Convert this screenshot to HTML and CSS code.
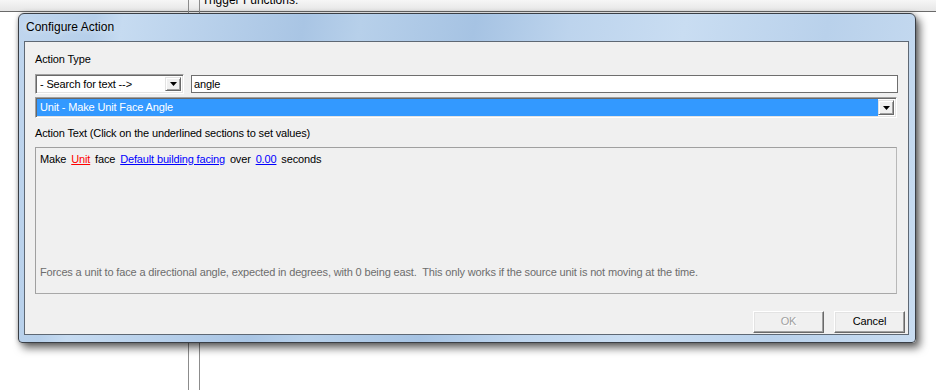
FILE: index.html
```html
<!DOCTYPE html>
<html>
<head>
<meta charset="utf-8">
<link rel="stylesheet" href="styles.css">
</head>
<body>
<div class="desktop">
  <div class="behind">
    <div class="behind-top"><span class="behind-title">Trigger Functions:</span></div>
    <div class="vline vline-a"></div>
    <div class="vline vline-b"></div>
  </div>

  <div class="dialog">
    <div class="titlebar">Configure Action</div>
    <div class="client">
      <div class="label">Action Type</div>
      <div class="row1">
        <div class="combo combo-small">
          <span class="combo-text">- Search for text --&gt;</span>
          <span class="drop"><svg width="7" height="4" viewBox="0 0 7 4"><path d="M0 0H7L3.5 4Z" fill="#000"/></svg></span>
        </div>
        <div class="textbox">angle</div>
      </div>
      <div class="combo combo-wide">
        <span class="combo-text selected">Unit - Make Unit Face Angle</span>
        <span class="drop"><svg width="7" height="4" viewBox="0 0 7 4"><path d="M0 0H7L3.5 4Z" fill="#000"/></svg></span>
      </div>
      <div class="label label2">Action Text (Click on the underlined sections to set values)</div>
      <div class="textarea">
        <div class="action-line">Make <a class="link red">Unit</a> face <a class="link blue">Default building facing</a> over <a class="link blue">0.00</a> seconds</div>
        <div class="desc">Forces a unit to face a directional angle, expected in degrees, with 0 being east.&nbsp; This only works if the source unit is not moving at the time.</div>
      </div>
      <div class="buttons">
        <div class="btn disabled">OK</div>
        <div class="btn">Cancel</div>
      </div>
    </div>
  </div>
</div>
</body>
</html>
```

FILE: styles.css
```css
* { box-sizing: border-box; }
html, body { margin: 0; padding: 0; }
body {
  width: 936px;
  height: 390px;
  background: #ffffff;
  overflow: hidden;
  font-family: "Liberation Sans", Arial, sans-serif;
  font-size: 11px;
  color: #000;
}
.desktop {
  position: relative;
  width: 936px;
  height: 390px;
}
.behind {
  position: absolute;
  left: 0; top: 0;
  width: 936px; height: 390px;
}
.behind-top {
  height: 12px;
  background: linear-gradient(#f6f6f6, #e6e6e6);
  border-bottom: 1px solid #6a6a6a;
  overflow: hidden;
  padding-left: 202px;
}
.behind-title {
  display: block;
  font-size: 12px;
  line-height: 12px;
  margin-top: -6px;
  color: #000;
}
.vline {
  position: absolute;
  top: 0;
  bottom: 0;
  width: 1px;
  background: #8c8c8c;
}
.vline-a { left: 188px; }
.vline-b { left: 199px; }

.dialog {
  position: absolute;
  left: 18px;
  top: 13px;
  width: 898px;
  height: 330px;
  border: 1px solid #3a3f46;
  border-radius: 6px 6px 4px 4px;
  background: linear-gradient(100deg, #c0d6ee 0%, #b6cfea 8%, #c6dbf1 11%, #a9c5e4 30%, #b7d0ea 36%, #a6c3e3 48%, #bdd4ed 58%, #c9ddf2 70%, #b9d1eb 85%, #c8dcf1 100%);
  box-shadow: 4px 5px 9px rgba(0,0,0,0.6), 0 0 4px rgba(0,0,0,0.25);
  display: flex;
  flex-direction: column;
  padding: 0 6px 7px 5px;
}
.titlebar {
  height: 27px;
  flex: none;
  font-family: "Liberation Sans", Arial, sans-serif;
  font-size: 12px;
  line-height: 27px;
  padding-left: 2px;
  color: #000;
  text-shadow: 0 0 6px rgba(255,255,255,0.8);
}
.client {
  flex: 1;
  border: 1px solid #5e6874;
  background: #f0f0f0;
  padding: 11px 11px 0 10px;
  display: flex;
  flex-direction: column;
  letter-spacing: -0.15px;
}
.label {
  height: 13px;
  line-height: 13px;
}
.row1 {
  margin-top: 8px;
  height: 20px;
  display: flex;
  gap: 7px;
}
.combo {
  position: relative;
  display: flex;
  align-items: stretch;
  background: #fff;
  border-top: 1px solid #a0a0a0;
  border-left: 1px solid #a0a0a0;
  border-right: 1px solid #ffffff;
  border-bottom: 1px solid #ffffff;
  box-shadow: inset 1px 1px 0 #696969, inset -1px -1px 0 #e3e3e3;
  padding: 2px;
}
.combo-small { width: 149px; flex: none; }
.combo-wide {
  margin-top: 3px;
  height: 21px;
  width: 862px;
}
.combo-text {
  flex: 1;
  line-height: 14px;
  padding-left: 2px;
  white-space: nowrap;
  overflow: hidden;
}
.combo-text.selected {
  background: #3399ff;
  color: #fff;
  margin: -1px 0 -1px -1px;
  padding-left: 3px;
  line-height: 17px;
}
.drop {
  width: 16px;
  flex: none;
  background: #f0f0f0;
  border-top: 1px solid #e3e3e3;
  border-left: 1px solid #e3e3e3;
  border-right: 1px solid #696969;
  border-bottom: 1px solid #696969;
  box-shadow: inset 1px 1px 0 #fff, inset -1px -1px 0 #a0a0a0;
  display: flex;
  align-items: center;
  justify-content: center;
}
.textbox {
  flex: 1;
  margin-top: 1px;
  height: 18px;
  border: 1px solid #6e6e6e;
  background: #fff;
  line-height: 16px;
  padding-left: 2px;
  margin-right: -1px;
}
.label2 {
  margin-top: 9px;
}
.textarea {
  margin-top: 7px;
  height: 147px;
  width: 862px;
  border: 1px solid #a0a0a0;
  border-right-color: #b8b8b8;
  border-bottom-color: #a8a8a8;
  padding: 5px 4px 14px 4px;
  display: flex;
  flex-direction: column;
  justify-content: space-between;
}
.action-line {
  line-height: 13px;
  word-spacing: 2px;
  white-space: nowrap;
}
.link { text-decoration: underline; word-spacing: 0; }
.red { color: #ff0000; }
.blue { color: #0000ff; }
.desc {
  line-height: 13px;
  color: #6d6d6d;
  white-space: nowrap;
}
.buttons {
  margin-top: 17px;
  display: flex;
  justify-content: flex-end;
  gap: 10px;
  margin-right: -8px;
}
.btn {
  width: 71px;
  height: 22px;
  background: #f0f0f0;
  border-top: 1px solid #ffffff;
  border-left: 1px solid #ffffff;
  border-right: 1px solid #696969;
  border-bottom: 1px solid #696969;
  box-shadow: inset -1px -1px 0 #a0a0a0, inset 1px 1px 0 #e3e3e3;
  text-align: center;
  line-height: 19px;
}
.btn.disabled {
  color: #a0a0a0;
  text-shadow: 1px 1px 0 #fff;
}
```
